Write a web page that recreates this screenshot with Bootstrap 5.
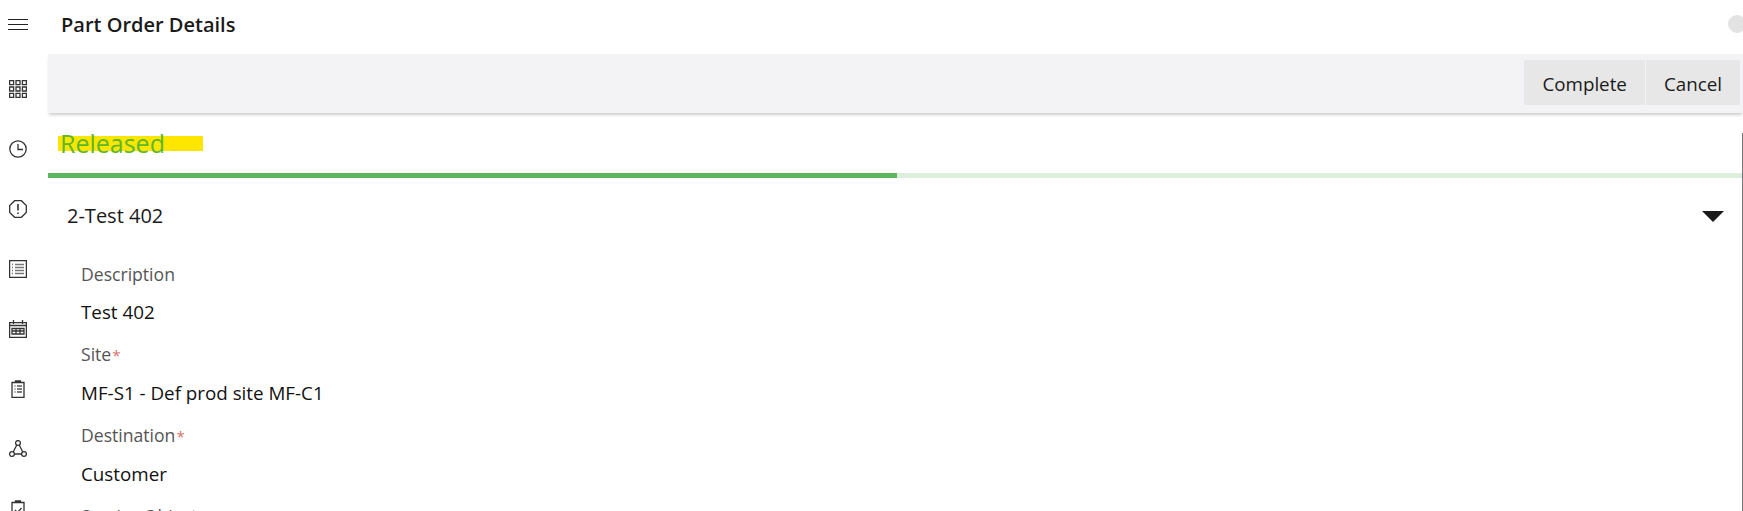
<!DOCTYPE html>
<html lang="en">
<head>
  <meta charset="UTF-8">
  <meta name="viewport" content="width=device-width, initial-scale=1">
  <title>Part Order Details</title>
  <link href="https://cdn.jsdelivr.net/npm/bootstrap@5.3.0/dist/css/bootstrap.min.css" rel="stylesheet">
  <style>
    html, body {
      height: 511px;
      overflow: hidden;
    }
    body {
      font-family: "Open Sans", "Liberation Sans", sans-serif;
      color: #1a1a1a;
    }
    .side-rail {
      width: 48px;
      flex: none;
      padding: 14px 12px 0 0;
      gap: 42px;
    }
    .side-rail svg {
      width: 18px;
      height: 18px;
      display: block;
      fill: none;
      stroke: #333;
      stroke-width: 1.3;
    }
    .side-rail svg.rail-menu {
      width: 20px;
      height: 20px;
      stroke: #222;
      stroke-width: 1;
      margin-bottom: 4px;
    }
    .page-head {
      height: 54px;
      padding-left: 13px;
    }
    .page-title {
      font-size: 20px;
      font-weight: 600;
      margin: 0 0 4px;
    }
    .user-dot {
      width: 18px;
      height: 18px;
      background: #e3e3e3;
      margin-right: -3px;
      margin-bottom: 6px;
    }
    .action-bar {
      height: 59px;
      background: #f3f2f4;
      box-shadow: 0 3px 3px -1px rgba(0, 0, 0, .2);
      padding: 6px 3px 8px 0;
      gap: 1px;
    }
    .action-btn {
      background: #e7e7e7;
      border: 0;
      border-radius: 0;
      font-size: 18.800px;
      color: #1a1a1a;
      padding: 3px 18px 0;
    }
    .state-row {
      height: 60px;
      padding: 14px 0 0 12px;
    }
    .state-name {
      font-size: 25px;
      line-height: 32px;
      color: #5cb82a;
    }
    .state-mark {
      left: -2px;
      top: 9px;
      width: 145px;
      height: 15px;
      background: #ffe600;
      z-index: -1;
    }
    .state-progress {
      height: 5px;
      border-radius: 0;
      background: #dcefdd;
    }
    .state-progress .progress-bar {
      background: #5cb660;
    }
    .part-head {
      height: 76px;
      padding: 0 18px 0 19px;
      font-size: 20px;
    }
    .drop-arrow {
      width: 0;
      height: 0;
      border-left: 11px solid transparent;
      border-right: 11px solid transparent;
      border-top: 11px solid #1a1a1a;
      margin-right: 1px;
    }
    .part-fields {
      padding-left: 33px;
      margin-top: 8px;
    }
    .field-label {
      font-size: 17.600px;
      line-height: 24px;
      color: #555;
    }
    .field-label i {
      font-style: normal;
      font-size: 15px;
      margin-left: 1px;
      color: #d9706c;
    }
    .field-value {
      font-size: 18.800px;
      line-height: 24px;
      color: #111;
      margin: 14px 0 18px;
    }
    .scroll-edge {
      top: 133px;
      right: 0;
      bottom: 0;
      width: 1px;
      background: #777;
    }
  </style>
</head>
<body>
  <div class="d-flex">
    <div class="side-rail d-flex flex-column align-items-center">
      <svg class="rail-menu" viewBox="0 0 20 20"><path d="M0 5.500h20M0 10.500h20M0 15.500h20"/></svg>
      <svg viewBox="0 0 18 18"><path d="M.6.6h4v4h-4zM7 .6h4v4H7zM13.400.6h4v4h-4zM.6 7h4v4h-4zM7 7h4v4H7zM13.400 7h4v4h-4zM.6 13.400h4v4h-4zM7 13.400h4v4H7zM13.400 13.400h4v4h-4z"/></svg>
      <svg viewBox="0 0 18 18"><circle cx="9" cy="9" r="8.200"/><path d="M9 4v5.500h5"/></svg>
      <svg viewBox="0 0 18 18"><path d="M5.600.7h6.800l4.900 4.900v6.800l-4.900 4.900H5.600L.7 12.400V5.600z"/><path d="M9 4v6.500M9 12.500v1.500" stroke-width="1.600"/></svg>
      <svg viewBox="0 0 18 18"><path d="M.6.6h16.800v16.800H.6z"/><path d="M3 4.500h1M6 4.500h9M3 7.500h1M6 7.500h9M3 10.500h1M6 10.500h9M3 13.500h1M6 13.500h9" stroke="#777"/></svg>
      <svg viewBox="0 0 18 18"><path d="M.6 2.600h16.800v14.800H.6zM.6 5.500h16.800M4.500 0v4M13.500 0v4"/><path d="M3 8.500h12v5.500H3zM7 8.500v5.500M11 8.500v5.500M3 11h12"/></svg>
      <svg viewBox="0 0 18 18"><path d="M3 2.500h12v15H3zM6.500 2.500V1h5v1.500"/><path d="M5.500 6h1M8 6h5M5.500 9h1M8 9h5M5.500 12h1M8 12h5" stroke="#555"/></svg>
      <svg viewBox="0 0 18 18"><circle cx="9" cy="3" r="2.400"/><circle cx="3" cy="14" r="2.400"/><circle cx="15" cy="14" r="2.400"/><path d="M7.800 5 4.200 12M10.200 5l3.600 7M5.400 14h7.200"/></svg>
      <svg viewBox="0 0 18 18"><path d="M3 2.500h12v15H3zM6.500 2.500V1h5v1.500"/><path d="m6 10 2.500 2.500L12.500 8"/></svg>
    </div>
    <div class="flex-grow-1 position-relative">
      <div class="page-head d-flex align-items-center justify-content-between">
        <h1 class="page-title">Part Order Details</h1>
        <div class="user-dot rounded-circle"></div>
      </div>
      <div class="action-bar d-flex justify-content-end">
        <button class="btn action-btn" type="button">Complete</button>
        <button class="btn action-btn" type="button">Cancel</button>
      </div>
      <div class="state-row">
        <span class="state-name d-inline-block position-relative">
          <span class="state-mark position-absolute"></span>Released
        </span>
      </div>
      <div class="progress state-progress">
        <div class="progress-bar" style="width: 50.1%"></div>
      </div>
      <div class="part-head d-flex align-items-center justify-content-between">
        <span>2-Test 402</span>
        <span class="drop-arrow"></span>
      </div>
      <div class="part-fields">
        <div class="field-label">Description</div>
        <div class="field-value">Test 402</div>
        <div class="field-label">Site<i>*</i></div>
        <div class="field-value">MF-S1 - Def prod site MF-C1</div>
        <div class="field-label">Destination<i>*</i></div>
        <div class="field-value">Customer</div>
        <div class="field-label">Service Object<i>*</i></div>
      </div>
      <div class="scroll-edge position-absolute"></div>
    </div>
  </div>
</body>
</html>
